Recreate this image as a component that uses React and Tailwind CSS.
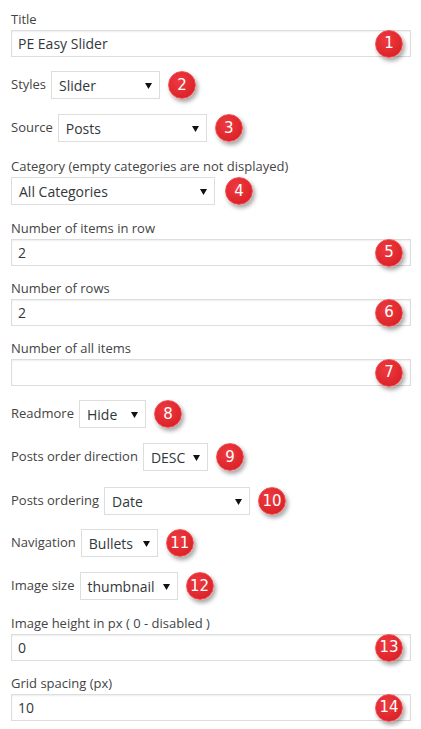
import React from 'react';

const Badge = ({ n }) => (
  <div className="w-[28px] h-[28px] shrink-0 rounded-full border border-[#f25257] bg-[radial-gradient(circle_at_40%_35%,#ee3a3f,#d41c21)] shadow-[2px_3px_4px_rgba(0,0,0,0.35)] flex items-center justify-center">
    <span className="text-white text-[15px] leading-none [font-family:'DejaVu_Sans',sans-serif]">{n}</span>
  </div>
);

const Arrow = () => (
  <svg width="7" height="7" viewBox="0 0 7 7" className="shrink-0">
    <path d="M0 1h7L3.5 7z" fill="#111" />
  </svg>
);

const TextField = ({ label, value, n, mt }) => (
  <div className={mt}>
    <div className="text-[13px] leading-[19px] mb-px text-[#444]">{label}</div>
    <div className="relative h-[27px] border border-[#ddd] bg-white shadow-[inset_0_1px_2px_rgba(0,0,0,0.07)] flex items-center px-[6px] text-[14px] text-[#32373c]">
      {value}
      <div className="absolute right-[7px] top-1/2 -translate-y-1/2">
        <Badge n={n} />
      </div>
    </div>
  </div>
);

const Select = ({ value, w }) => (
  <div className={`${w} h-[28px] border border-[#ddd] bg-white flex items-center justify-between pl-[7px] pr-[7px] text-[14px] text-[#32373c]`}>
    <span>{value}</span>
    <Arrow />
  </div>
);

const SelectRow = ({ label, value, w, n, mt }) => (
  <div className={`${mt} flex items-center`}>
    <span className="text-[13px] text-[#444] mr-[5px]">{label}</span>
    <Select value={value} w={w} />
    <div className="ml-[8px]">
      <Badge n={n} />
    </div>
  </div>
);

export default function App() {
  return (
    <div className="min-h-screen bg-white pl-[11px] pr-[10px] pt-[10px] [font-family:'Open_Sans',sans-serif]">
      <div className="text-[13px] leading-[19px] mb-px text-[#444]">Title</div>
      <div className="relative h-[27px] border border-[#ddd] bg-white shadow-[inset_0_1px_2px_rgba(0,0,0,0.07)] flex items-center px-[6px] text-[14px] text-[#32373c]">
        PE Easy Slider
        <div className="absolute right-[7px] top-1/2 -translate-y-1/2">
          <Badge n="1" />
        </div>
      </div>

      <SelectRow mt="mt-[14px]" label="Styles" value="Slider" w="w-[109px]" n="2" />
      <SelectRow mt="mt-[15px]" label="Source" value="Posts" w="w-[149px]" n="3" />

      <div className="mt-[15px]">
        <div className="text-[13px] leading-[19px] mb-px text-[#444]">Category (empty categories are not displayed)</div>
        <div className="flex items-center">
          <Select value="All Categories" w="w-[204px]" />
          <div className="ml-[10px]">
            <Badge n="4" />
          </div>
        </div>
      </div>

      <TextField mt="mt-[14px]" label="Number of items in row" value="2" n="5" />
      <TextField mt="mt-[13px]" label="Number of rows" value="2" n="6" />
      <TextField mt="mt-[13px]" label="Number of all items" value="" n="7" />

      <SelectRow mt="mt-[14px]" label="Readmore" value="Hide" w="w-[67px]" n="8" />
      <SelectRow mt="mt-[15px]" label="Posts order direction" value="DESC" w="w-[65px]" n="9" />
      <SelectRow mt="mt-[16px]" label="Posts ordering" value="Date" w="w-[146px]" n="10" />
      <SelectRow mt="mt-[14px]" label="Navigation" value="Bullets" w="w-[77px]" n="11" />
      <SelectRow mt="mt-[15px]" label="Image size" value="thumbnail" w="w-[98px]" n="12" />

      <TextField mt="mt-[14px]" label="Image height in px ( 0 - disabled )" value="0" n="13" />
      <TextField mt="mt-[13px]" label="Grid spacing (px)" value="10" n="14" />
    </div>
  );
}
